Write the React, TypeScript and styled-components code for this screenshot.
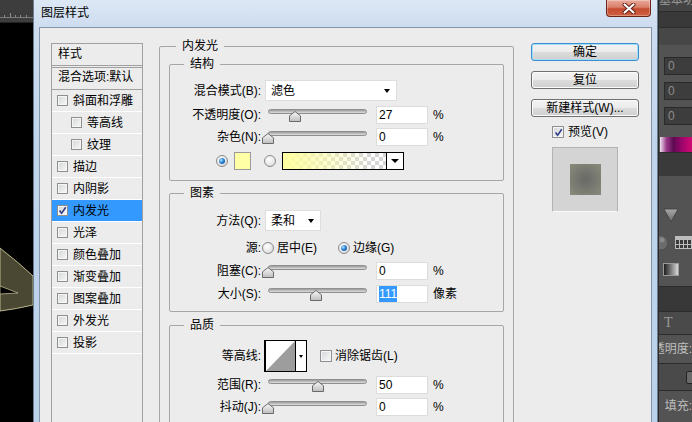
import styled, { createGlobalStyle } from 'styled-components'

const FONT = `"Liberation Sans", "Noto Sans CJK SC", sans-serif`

const GlobalStyle = createGlobalStyle`
  * { box-sizing: border-box; }
  html, body { margin: 0; padding: 0; background: #000; }
  body { font-family: ${FONT}; font-size: 12px; color: #000; }
`

const Screen = styled.div`
  display: flex;
  width: 692px;
  height: 422px;
  overflow: hidden;
`

/* photoshop canvas peeking out on the left */
const Backdrop = styled.div`
  flex: none;
  width: 33px;
  display: flex;
  flex-direction: column;
  background: #000;
`

const Drawing = styled.svg`
  display: block;
  flex: none;
`

/* the dialog window */
const Dialog = styled.div`
  flex: none;
  width: 625px;
  display: flex;
  flex-direction: column;
  border-left: 1px solid #6b7d91;
  border-right: 1px solid #6b7d91;
  background: linear-gradient(180deg, #dde8f5 0px, #cddcef 27px, #c0d5ec 140px, #bad1ea 100%);
`

const TitleBar = styled.div`
  flex: none;
  height: 27px;
  display: flex;
  align-items: flex-start;
  padding-left: 7px;
`

const Title = styled.div`
  margin-top: 6px;
  line-height: 14px;
`

const CloseButton = styled.div`
  margin-left: auto;
  margin-right: 6px;
  width: 45px;
  height: 17px;
  border: 1px solid #6d2418;
  border-top: none;
  border-radius: 0 0 4px 4px;
  background: linear-gradient(180deg, #eaa99b 0%, #d9806a 45%, #c44b31 55%, #d0603f 100%);
  box-shadow: inset 0 0 0 1px rgba(255, 255, 255, 0.3);
  display: flex;
  align-items: center;
  justify-content: center;
`

const Frame = styled.div`
  flex: 1;
  min-height: 0;
  display: flex;
  padding: 0 5px;
`

const Client = styled.div`
  flex: 1;
  display: flex;
  align-items: flex-start;
  padding: 11px 12px 0 11px;
  background: #ececec;
  border: 1px solid #8495a8;
  border-bottom: none;
  overflow: hidden;
`

/* style list */
const StyleList = styled.div`
  flex: none;
  width: 92px;
  height: 400px;
  margin-top: 4px;
  border: 1px solid #a0a0a0;
  border-bottom: none;
  background: #ececec;
`

const ListHeader = styled.div`
  height: 24px;
  padding-left: 6px;
  line-height: 21px;
  border-bottom: 3px double #a0a0a0;
`

const BlendItem = styled.div`
  height: 22px;
  padding-left: 6px;
  line-height: 19px;
  border-bottom: 1px solid #a0a0a0;
  white-space: nowrap;
`

const EffectItem = styled.div<{ $indent: number; $active?: boolean }>`
  height: 22px;
  display: flex;
  align-items: center;
  gap: 5px;
  padding-left: ${p => p.$indent}px;
  line-height: 14px;
  border-bottom: 1px solid #fff;
  background: ${p => (p.$active ? '#3399ff' : 'transparent')};
  white-space: nowrap;
`

const CheckBox = styled.span<{ $size?: number }>`
  flex: none;
  width: ${p => p.$size ?? 11}px;
  height: ${p => p.$size ?? 11}px;
  border: 1px solid #8e8f8f;
  background: linear-gradient(135deg, #d3d6da 0%, #eeeeee 70%, #f8f8f8 100%);
  box-shadow: inset 0 0 0 1px #f5f5f5;
  display: flex;
  align-items: center;
  justify-content: center;
`

const Radio = styled.span<{ $on?: boolean }>`
  flex: none;
  width: 12px;
  height: 12px;
  border-radius: 50%;
  border: 1px solid #8a8a8a;
  background: radial-gradient(circle at 40% 35%, #ffffff 0%, #e8e8e8 55%, #cdcdcd 100%);
  display: flex;
  align-items: center;
  justify-content: center;
  &::after {
    content: '';
    display: ${p => (p.$on ? 'block' : 'none')};
    width: 6px;
    height: 6px;
    border-radius: 50%;
    background: radial-gradient(circle at 35% 35%, #b8e4ff 0%, #2b86d8 45%, #0b3e86 100%);
  }
`

/* main settings */
const MainPane = styled.div`
  flex: none;
  width: 355px;
  margin-left: 16px;
`

const GroupBox = styled.fieldset<{ $mt?: number }>`
  margin: ${p => p.$mt ?? 0}px 0 0;
  padding: 0;
  min-width: 0;
  border: 1px solid #a6a6a6;
  border-radius: 2px;
`

const GroupTitle = styled.legend<{ $indent: number }>`
  margin-left: ${p => p.$indent}px;
  padding: 0 6px;
  line-height: 14px;
`

const GroupBody = styled.div<{ $pad: string }>`
  padding: ${p => p.$pad};
`

const Row = styled.div<{ $h: number; $mt?: number; $pl?: number }>`
  display: flex;
  align-items: center;
  height: ${p => p.$h}px;
  margin-top: ${p => p.$mt ?? 0}px;
  padding-left: ${p => p.$pl ?? 0}px;
  line-height: 14px;
  white-space: nowrap;
`

const FieldLabel = styled.span`
  flex: none;
  width: 91px;
  text-align: right;
`

const DropDown = styled.div<{ $w: number }>`
  flex: none;
  width: ${p => p.$w}px;
  height: 21px;
  margin-left: 4px;
  padding: 0 6px 0 5px;
  display: flex;
  align-items: center;
  justify-content: space-between;
  background: #fff;
  border: 1px solid #dedede;
`

const Caret = styled.span`
  width: 0;
  height: 0;
  border-left: 3px solid transparent;
  border-right: 3px solid transparent;
  border-top: 4px solid #000;
`

const Slider = styled.div`
  position: relative;
  flex: none;
  width: 106px;
  height: 18px;
  margin-left: 4px;
`

const Track = styled.div`
  width: 99px;
  height: 5px;
  margin: 3px 0 0 3px;
  border: 1px solid #8f8f8f;
  border-radius: 3px;
  background: linear-gradient(180deg, #9a9a9a 0%, #c4c4c4 60%, #dedede 100%);
`

const Thumb = styled.svg`
  position: absolute;
  top: 5px;
  width: 12px;
  height: 11px;
  margin-left: -6px;
`

const NumberBox = styled.div`
  flex: none;
  width: 52px;
  height: 18px;
  margin-left: 5px;
  padding-left: 2px;
  background: #fff;
  border: 1px solid #dcdcdc;
  line-height: 16px;
`

const Picked = styled.span`
  background: #3399ff;
  color: #fff;
  padding: 1px 0;
`

const Unit = styled.span`
  margin-left: 5px;
`

const Swatch = styled.div`
  flex: none;
  width: 17px;
  height: 18px;
  margin-left: 6px;
  background: #ffffa6;
  border: 1px solid #9a9a9a;
`

const GradientPicker = styled.div`
  flex: none;
  width: 122px;
  height: 18px;
  margin-left: 6px;
  display: flex;
  border: 1px solid #000;
`

const GradientFill = styled.div`
  flex: 1;
  background-color: #fff;
  background-image:
    linear-gradient(90deg, #ffffa0 0%, rgba(255, 255, 160, 0.6) 35%, rgba(255, 255, 160, 0) 85%),
    linear-gradient(45deg, #d6d6d6 25%, transparent 25%, transparent 75%, #d6d6d6 75%),
    linear-gradient(45deg, #d6d6d6 25%, transparent 25%, transparent 75%, #d6d6d6 75%);
  background-size: 100% 100%, 8px 8px, 8px 8px;
  background-position: 0 0, 0 0, 4px 4px;
`

const PickerArrow = styled.div<{ $w: number }>`
  flex: none;
  width: ${p => p.$w}px;
  border-left: 1px solid #000;
  background: #fff;
  display: flex;
  align-items: center;
  justify-content: center;
`

const RadioOption = styled.span<{ $ml: number }>`
  display: flex;
  align-items: center;
  gap: 3px;
  margin-left: ${p => p.$ml}px;
`

const ContourBox = styled.div`
  flex: none;
  width: 43px;
  height: 32px;
  margin-left: 3px;
  display: flex;
  border: 1px solid #000;
  border-left-width: 2px;
  background: #fff;
`

const CheckOption = styled.span<{ $ml: number }>`
  display: flex;
  align-items: center;
  gap: 3px;
  margin-left: ${p => p.$ml}px;
`

/* buttons column */
const ActionPane = styled.div`
  flex: none;
  width: 108px;
  margin-left: 17px;
  margin-top: 4px;
  display: flex;
  flex-direction: column;
`

const ButtonStack = styled.div`
  display: flex;
  flex-direction: column;
  gap: 10px;
`

const DialogButton = styled.button<{ $primary?: boolean }>`
  width: 108px;
  height: 18px;
  margin: 0;
  padding: 0;
  font: 12px/14px ${FONT};
  color: #000;
  border: 1px solid ${p => (p.$primary ? '#3c8fcf' : '#707070')};
  border-radius: 3px;
  background: linear-gradient(180deg, #f3f3f3 0%, #ebebeb 49%, #dddddd 50%, #cfcfcf 100%);
  box-shadow: inset 0 0 0 1px ${p => (p.$primary ? '#a5dcf8' : '#fbfbfb')};
`

const PreviewToggle = styled.div`
  display: flex;
  align-items: center;
  gap: 4px;
  margin: 9px 0 0 21px;
  height: 12px;
  line-height: 14px;
`

const PreviewFrame = styled.div`
  width: 66px;
  height: 65px;
  margin: 9px 0 0 21px;
  display: flex;
  align-items: center;
  justify-content: center;
  background: #d4d4d4;
  border: 1px solid #b3b3b3;
  border-bottom-color: #fafafa;
`

const PreviewSwatch = styled.div`
  width: 31px;
  height: 31px;
  background: radial-gradient(circle, #686866 0%, #777870 45%, #898c7b 100%);
`

/* photoshop panels on the right */
const SidePanel = styled.div`
  flex: 1;
  display: flex;
  flex-direction: column;
  background: #535353;
  border-left: 1px solid #2a2a2a;
  overflow: hidden;
  color: #bdbdbd;
`

const PanelBand = styled.div<{ $h: number; $bg: string; $mt?: number; $end?: boolean }>`
  flex: none;
  height: ${p => p.$h}px;
  margin-top: ${p => p.$mt ?? 0}px;
  background: ${p => p.$bg};
  border-top: 1px solid #2c2c2c;
  display: flex;
  align-items: center;
  justify-content: ${p => (p.$end ? 'flex-end' : 'flex-start')};
  overflow: hidden;
  white-space: nowrap;
  line-height: 14px;
`

const PanelTab = styled.div`
  flex: none;
  height: 11px;
  background: #444;
  display: flex;
  align-items: flex-end;
  overflow: hidden;
  white-space: nowrap;
  color: #9a9a9a;
  line-height: 14px;
  span { margin-bottom: 4px; }
`

const PanelField = styled.div<{ $mt: number }>`
  flex: none;
  height: 18px;
  margin: ${p => p.$mt}px 0 0 5px;
  padding-left: 3px;
  background: #3d3d3d;
  border: 1px solid #2a2a2a;
  border-right: none;
  color: #8c8c8c;
  line-height: 16px;
`

const HueBar = styled.div`
  flex: none;
  height: 15px;
  margin: 12px 0 0 1px;
  background: linear-gradient(90deg, #efe4ee 0%, #9a3a8a 20%, #5e0a52 42%, #a0056c 70%, #d20a74 100%);
`

const PanelIcon = styled.svg<{ $mt: number; $ml: number }>`
  display: block;
  flex: none;
  margin: ${p => p.$mt}px 0 0 ${p => p.$ml}px;
`

const IconRow = styled.div`
  flex: none;
  display: flex;
  align-items: center;
  height: 14px;
  margin-top: 12px;
`

const GradientChip = styled.div`
  flex: none;
  width: 16px;
  height: 13px;
  margin: 14px 0 0 4px;
  border: 1px solid #9a9a9a;
  background: linear-gradient(90deg, #1e1e1e, #d8d8d8);
`

const MiniSelect = styled.div`
  flex: none;
  width: 10px;
  height: 13px;
  margin-left: auto;
  margin-right: -4px;
  border: 1px solid #222;
  border-radius: 2px;
  background: #6a6a6a;
`

const SerifT = styled.span`
  margin-left: 5px;
  font-family: "Liberation Serif", serif;
  font-size: 14px;
  color: #9a9a9a;
`

const effects = [
  { name: '斜面和浮雕', indent: 5 },
  { name: '等高线', indent: 19 },
  { name: '纹理', indent: 19 },
  { name: '描边', indent: 5 },
  { name: '内阴影', indent: 5 },
  { name: '内发光', indent: 5, checked: true },
  { name: '光泽', indent: 5 },
  { name: '颜色叠加', indent: 5 },
  { name: '渐变叠加', indent: 5 },
  { name: '图案叠加', indent: 5 },
  { name: '外发光', indent: 5 },
  { name: '投影', indent: 5 },
]

const Tick = () => (
  <svg width="9" height="9" viewBox="0 0 9 9">
    <path d="M1.5 4.5 L3.6 7.2 L7.8 1.2" fill="none" stroke="#2f3f86" strokeWidth="1.6" />
  </svg>
)

const SliderControl = ({ pos }: { pos: number }) => (
  <Slider>
    <Track />
    <Thumb viewBox="0 0 12 11" style={{ left: 3 + pos * 0.99 }}>
      <defs>
        <linearGradient id="thumbFill" x1="0" y1="0" x2="0" y2="1">
          <stop offset="0" stopColor="#fafafa" />
          <stop offset="1" stopColor="#bdbdbd" />
        </linearGradient>
      </defs>
      <polygon points="6,0.5 11.5,4.8 11.5,10.5 0.5,10.5 0.5,4.8" fill="url(#thumbFill)" stroke="#6a6a6a" />
    </Thumb>
  </Slider>
)

const SliderRow = ({
  label,
  pos,
  value,
  unit,
  mt,
}: {
  label: React.ReactNode
  pos: number
  value: React.ReactNode
  unit: string
  mt: number
}) => (
  <Row $h={18} $mt={mt}>
    <FieldLabel>{label}</FieldLabel>
    <SliderControl pos={pos} />
    <NumberBox>{value}</NumberBox>
    <Unit>{unit}</Unit>
  </Row>
)

export default function App() {
  return (
    <>
      <GlobalStyle />
      <Screen>
        <Backdrop>
          <Drawing width="33" height="23" viewBox="0 0 33 23">
            <rect width="33" height="23" fill="#3d3d3d" />
            <path d="M0 17.5 H33" stroke="#7c7c7c" />
            <path d="M4.5 15 V17 M10.5 13 V17 M15.5 15 V17 M20.5 15 V17 M26.5 15 V17" stroke="#8a8a8a" />
            <path d="M0 22.5 H33" stroke="#222" />
          </Drawing>
          <Drawing width="33" height="399" viewBox="0 23 33 399">
            <path d="M0 248 Q18 262 33 276 L33 305 Q16 309 0 311 Z" fill="#4a4832" stroke="#b9b68e" strokeWidth="1" />
            <path d="M0 286 L18 293 L0 294 Z" fill="#000" stroke="#b9b68e" strokeWidth="0.8" />
          </Drawing>
        </Backdrop>

        <Dialog>
          <TitleBar>
            <Title>图层样式</Title>
            <CloseButton>
              <svg width="14" height="11" viewBox="0 0 14 11">
                <path d="M2.5 1.5 L11.5 9.5 M11.5 1.5 L2.5 9.5" stroke="#5b1a10" strokeWidth="4" strokeLinecap="round" />
                <path d="M2.5 1.5 L11.5 9.5 M11.5 1.5 L2.5 9.5" stroke="#fff" strokeWidth="2.2" strokeLinecap="round" />
              </svg>
            </CloseButton>
          </TitleBar>

          <Frame>
            <Client>
              <StyleList>
                <ListHeader>样式</ListHeader>
                <BlendItem>混合选项:默认</BlendItem>
                {effects.map(e => (
                  <EffectItem key={e.name} $indent={e.indent} $active={e.checked}>
                    <CheckBox>{e.checked && <Tick />}</CheckBox>
                    {e.name}
                  </EffectItem>
                ))}
              </StyleList>

              <MainPane>
                <GroupBox>
                  <GroupTitle $indent={16}>内发光</GroupTitle>
                  <GroupBody $pad="4px 9px 30px">
                    <GroupBox>
                      <GroupTitle $indent={14}>结构</GroupTitle>
                      <GroupBody $pad="9px 0 10px">
                        <Row $h={21}>
                          <FieldLabel>混合模式(B):</FieldLabel>
                          <DropDown $w={132}>
                            滤色
                            <Caret />
                          </DropDown>
                        </Row>
                        <SliderRow label="不透明度(O):" pos={27} value="27" unit="%" mt={5} />
                        <SliderRow label="杂色(N):" pos={0} value="0" unit="%" mt={4} />
                        <Row $h={18} $mt={6} $pl={46}>
                          <Radio $on />
                          <Swatch />
                          <Radio style={{ marginLeft: 13 }} />
                          <GradientPicker>
                            <GradientFill />
                            <PickerArrow $w={17}>
                              <Caret style={{ borderLeftWidth: 4, borderRightWidth: 4 }} />
                            </PickerArrow>
                          </GradientPicker>
                        </Row>
                      </GroupBody>
                    </GroupBox>

                    <GroupBox $mt={5}>
                      <GroupTitle $indent={14}>图素</GroupTitle>
                      <GroupBody $pad="10px 0 8px">
                        <Row $h={21}>
                          <FieldLabel>方法(Q):</FieldLabel>
                          <DropDown $w={56}>
                            柔和
                            <Caret />
                          </DropDown>
                        </Row>
                        <Row $h={16} $mt={9}>
                          <FieldLabel>源:</FieldLabel>
                          <RadioOption $ml={1}>
                            <Radio />
                            居中(E)
                          </RadioOption>
                          <RadioOption $ml={21}>
                            <Radio $on />
                            边缘(G)
                          </RadioOption>
                        </Row>
                        <SliderRow label="阻塞(C):" pos={0} value="0" unit="%" mt={6} />
                        <SliderRow label="大小(S):" pos={48} value={<Picked>111</Picked>} unit="像素" mt={5} />
                      </GroupBody>
                    </GroupBox>

                    <GroupBox $mt={6}>
                      <GroupTitle $indent={14}>品质</GroupTitle>
                      <GroupBody $pad="8px 0 10px">
                        <Row $h={32}>
                          <FieldLabel>等高线:</FieldLabel>
                          <ContourBox>
                            <svg width="29" height="30" viewBox="0 0 29 30">
                              <polygon points="0,30 29,0 29,30" fill="#9d9d9d" />
                            </svg>
                            <PickerArrow $w={11}>
                              <Caret style={{ borderLeftWidth: 2.5, borderRightWidth: 2.5, borderTopWidth: 3 }} />
                            </PickerArrow>
                          </ContourBox>
                          <CheckOption $ml={13}>
                            <CheckBox $size={12} />
                            消除锯齿(L)
                          </CheckOption>
                        </Row>
                        <SliderRow label="范围(R):" pos={50} value="50" unit="%" mt={4} />
                        <SliderRow label="抖动(J):" pos={0} value="0" unit="%" mt={4} />
                      </GroupBody>
                    </GroupBox>
                  </GroupBody>
                </GroupBox>
              </MainPane>

              <ActionPane>
                <ButtonStack>
                  <DialogButton $primary>确定</DialogButton>
                  <DialogButton>复位</DialogButton>
                  <DialogButton>新建样式(W)...</DialogButton>
                </ButtonStack>
                <PreviewToggle>
                  <CheckBox $size={12}>
                    <Tick />
                  </CheckBox>
                  预览(V)
                </PreviewToggle>
                <PreviewFrame>
                  <PreviewSwatch />
                </PreviewFrame>
              </ActionPane>
            </Client>
          </Frame>
        </Dialog>

        <SidePanel>
          <PanelTab>
            <span>基本功能</span>
          </PanelTab>
          <PanelBand $h={16} $bg="#393939" />
          <PanelBand $h={18} $bg="#474747" />
          <PanelField $mt={12}>0</PanelField>
          <PanelField $mt={7}>0</PanelField>
          <PanelField $mt={7}>0</PanelField>
          <HueBar />
          <PanelBand $h={24} $bg="#3a3a3a" />
          <PanelIcon $mt={31} $ml={4} width="16" height="16" viewBox="0 0 16 16">
            <defs>
              <linearGradient id="triFill" x1="0" y1="0" x2="0" y2="1">
                <stop offset="0" stopColor="#a8a8a8" />
                <stop offset="1" stopColor="#6a6a6a" />
              </linearGradient>
            </defs>
            <polygon points="1,2 15,2 8,15" fill="url(#triFill)" stroke="#3e3e3e" strokeWidth="0.8" />
          </PanelIcon>
          <IconRow>
            <svg width="10" height="14" viewBox="0 0 10 14">
              <circle cx="1" cy="8" r="7" fill="#6c6c6c" />
              <circle cx="3" cy="5" r="2.5" fill="#8a8a8a" />
            </svg>
            <svg width="17" height="13" viewBox="0 0 17 13" style={{ marginLeft: 6 }}>
              <rect x="0.5" y="0.5" width="16" height="12" fill="#3a3a3a" stroke="#bdbdbd" />
              <rect x="1" y="1" width="15" height="3" fill="#bdbdbd" />
              <path d="M4.5 0.5 V12.5 M8.5 0.5 V12.5 M12.5 0.5 V12.5 M0.5 8.5 H16.5" stroke="#bdbdbd" />
            </svg>
          </IconRow>
          <GradientChip />
          <PanelBand $h={25} $bg="#383838" $mt={10} />
          <PanelBand $h={23} $bg="#4a4a4a">
            <SerifT>T</SerifT>
          </PanelBand>
          <PanelBand $h={29} $bg="#535353" $end>
            不透明度:
          </PanelBand>
          <PanelBand $h={27} $bg="#4a4a4a">
            <MiniSelect />
          </PanelBand>
          <PanelBand $h={30} $bg="#535353" $end>
            填充:
          </PanelBand>
        </SidePanel>
      </Screen>
    </>
  )
}
